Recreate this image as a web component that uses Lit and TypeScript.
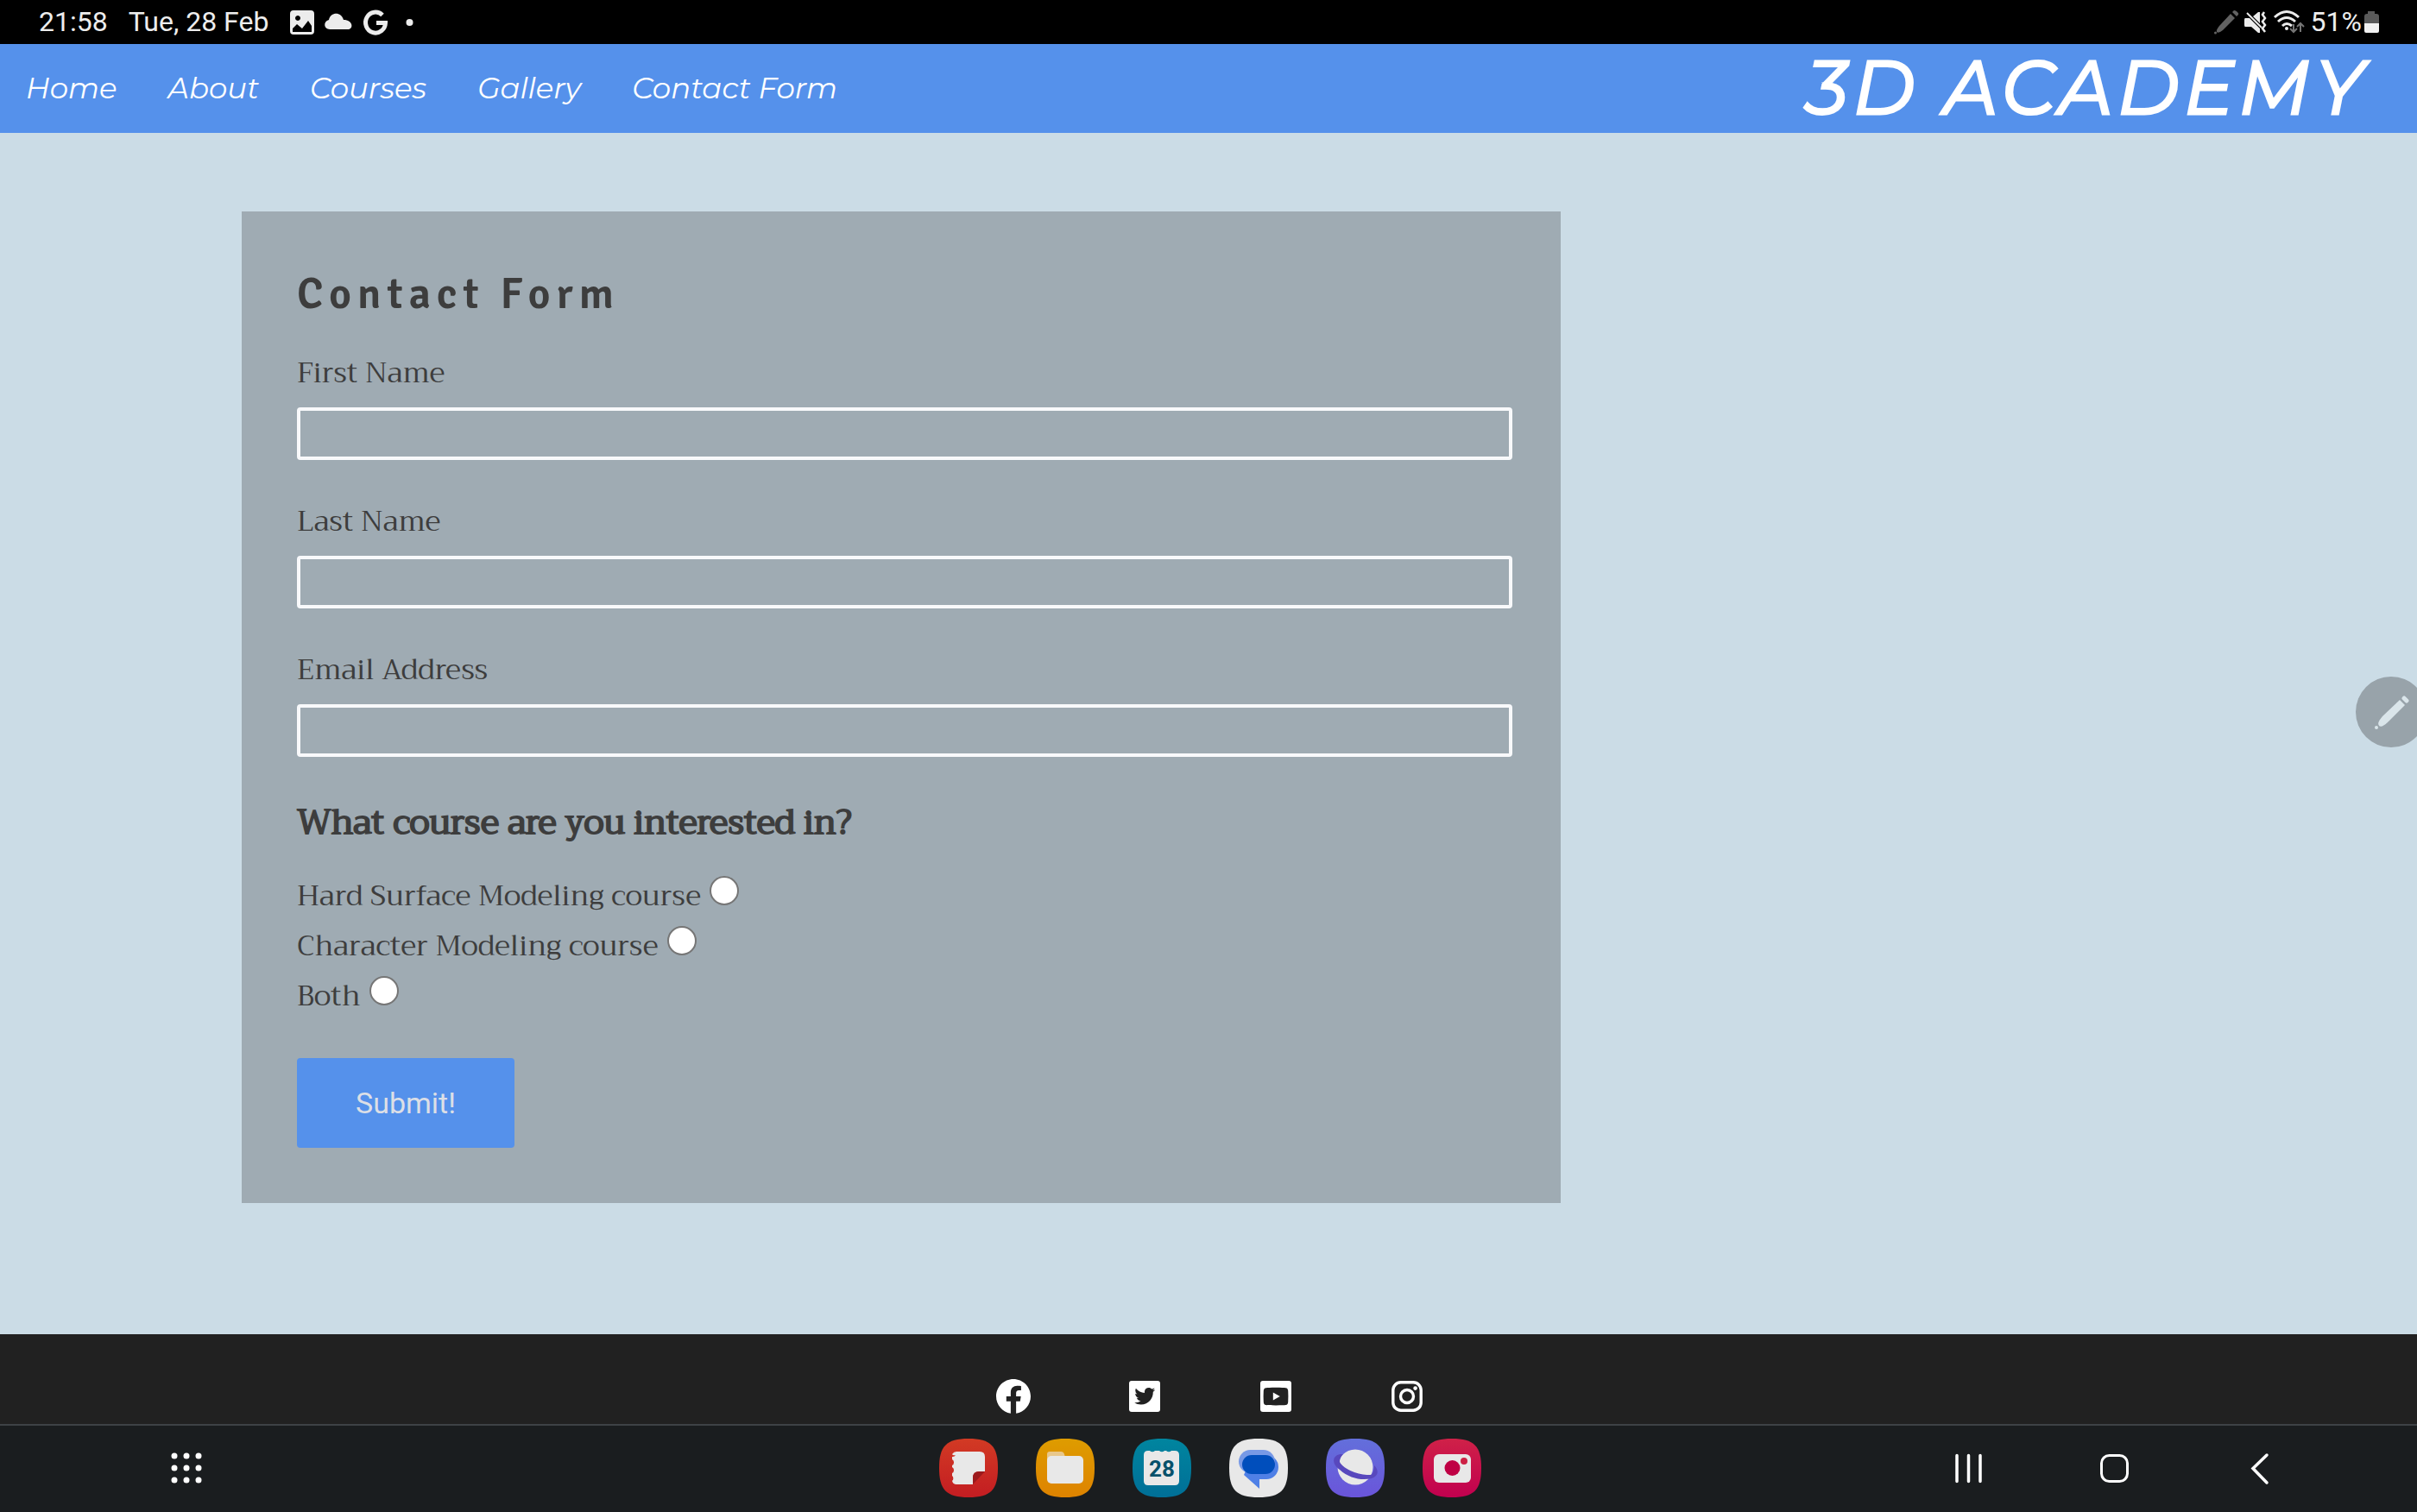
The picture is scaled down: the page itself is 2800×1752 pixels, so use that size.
import { LitElement, html, css, svg } from "lit";
import { customElement } from "lit/decorators.js";

const SQUIRCLE = "M34 0C60 0 68 9 68 34S60 68 34 68 0 59 0 34 8 0 34 0Z";

@customElement("status-bar")
class StatusBar extends LitElement {
  static styles = css`
    :host {
      display: flex;
      align-items: center;
      justify-content: space-between;
      height: 51px;
      padding: 0 42px 0 45px;
      background: #000;
      color: #ededed;
      font: 400 32px/51px Roboto, sans-serif;
    }
    .side {
      display: flex;
      align-items: center;
    }
    .date {
      margin: 0 24px;
    }
    svg {
      display: block;
    }
  `;

  render() {
    return html`
      <div class="side">
        <span>21:58</span>
        <span class="date">Tue, 28 Feb</span>
        <svg width="152" height="40" viewBox="0 0 152 40" fill="#ececec" aria-hidden="true">
          <path fill-rule="evenodd" d="M5 6H25Q29 6 29 10V30Q29 34 25 34H5Q1 34 1 30V10Q1 6 5 6ZM10 12A3 3 0 1 0 10.010 12ZM4 27V31H26V24L22 18L15 27L9 22Z"/>
          <path d="M47 28C40 28 39 19 46 17C48 8 60 7 63 17C74 17 75 28 68 28Z"/>
          <path fill="none" stroke="#ececec" stroke-width="5" d="M108 11.500A11.500 12 0 1 0 111.500 20.500H101"/>
          <circle cx="139.500" cy="20" r="4"/>
        </svg>
      </div>
      <div class="side">
        <svg width="112" height="40" viewBox="0 0 112 40" aria-hidden="true">
          <g fill="#626262">
            <path d="M19 10L24 15L10 29Q5 33 3 31Q2 29 6 24Z"/>
            <path d="M21 8L23 6Q25 6 27 8T28 11L26 13Z"/>
            <circle cx="1.500" cy="32" r="1.500"/>
          </g>
          <path fill="#ececec" d="M36 15H41L53 27V32H51L43 25H36Q35 25 35 23V17Q35 15 36 15ZM45 13L51 8H53V21Z"/>
          <path d="M38 9L55 26" stroke="#ececec" stroke-width="2"/>
          <path d="M58 8L56 11L59 15L56 19L59 23L56 27L59 31" fill="none" stroke="#ececec" stroke-width="2.500"/>
          <g fill="none" stroke="#ececec" stroke-width="3">
            <path d="M70 14Q84 1 98 14M74 19Q84 10 94 19M79 24Q84 19 90 24"/>
          </g>
          <circle cx="84" cy="27" r="2" fill="#ececec"/>
          <g fill="none" stroke="#757575" stroke-width="2">
            <path d="M92 22V30M88 27L92 31L96 27M100 31V22M96 25L100 21L104 25"/>
          </g>
        </svg>
        <span>51%</span>
        <svg width="22" height="40" viewBox="0 0 22 40" aria-hidden="true">
          <path fill="#5a5a5a" d="M7 7H15V10H17Q20 10 20 13V21H3V13Q3 10 6 10H7Z"/>
          <path fill="#f1f1f1" d="M3 21H20V30Q20 32 18 32H5Q3 32 3 30Z"/>
        </svg>
      </div>
    `;
  }
}

@customElement("site-header")
class SiteHeader extends LitElement {
  static styles = css`
    :host {
      display: flex;
      align-items: center;
      justify-content: space-between;
      height: 101px;
      padding: 0 56px 2px 30px;
      background: #5591eb;
      font-family: Montserrat, Inter, sans-serif;
      font-style: italic;
    }
    nav {
      display: flex;
      gap: 59px;
    }
    a {
      color: #fff;
      text-decoration: none;
      font-size: 34px;
      line-height: 44px;
    }
    .brand {
      color: #fff;
      font-size: 86px;
      line-height: 100px;
      letter-spacing: 6px;
      white-space: nowrap;
      -webkit-text-stroke: 3px currentColor;
    }
  `;

  private links = ["Home", "About", "Courses", "Gallery", "Contact Form"];

  render() {
    return html`
      <nav>${this.links.map((l) => html`<a href="#">${l}</a>`)}</nav>
      <div class="brand">3D ACADEMY</div>
    `;
  }
}

@customElement("contact-form")
class ContactForm extends LitElement {
  static styles = css`
    :host {
      display: block;
      color: #3d3d3d;
      font-family: Trirong, "Liberation Serif", serif;
    }
    form {
      padding: 64px;
      background: #9fabb3;
    }
    h1 {
      margin: 0 0 36px;
      font: 600 50px/64px Signika, Lato, sans-serif;
      letter-spacing: 7px;
    }
    .field {
      margin-bottom: 48px;
    }
    .field label {
      display: block;
      margin-bottom: 17px;
      font-size: 33px;
      line-height: 46px;
    }
    .field input {
      display: block;
      box-sizing: content-box;
      width: 100%;
      height: 53px;
      padding: 0;
      border: 4px solid #f8f9fb;
      border-radius: 4px;
      background: transparent;
      font: 32px Roboto, sans-serif;
    }
    fieldset {
      margin: 0 0 43px;
      padding: 0;
      border: 0;
    }
    legend {
      margin: 0 0 28px;
      padding: 0;
      font-size: 39px;
      line-height: 56px;
      -webkit-text-stroke: 2px currentColor;
    }
    .choice {
      display: flex;
      align-items: baseline;
      gap: 10px;
      height: 58px;
      font-size: 33px;
      line-height: 58px;
    }
    .choice input {
      appearance: none;
      box-sizing: border-box;
      width: 34px;
      height: 34px;
      margin: 0;
      border: 2px solid #767676;
      border-radius: 50%;
      background: #fff;
    }
    .choice input:checked {
      border-width: 10px;
      border-color: #5591eb;
    }
    button {
      display: block;
      height: 104px;
      padding: 0 68px;
      border: 0;
      border-radius: 4px;
      background: #5591eb;
      color: #dcdfe6;
      font: 400 34px/40px Roboto, sans-serif;
    }
  `;

  private fields = [
    { id: "first", label: "First Name", type: "text" },
    { id: "last", label: "Last Name", type: "text" },
    { id: "email", label: "Email Address", type: "email" },
  ];

  private courses = [
    { id: "hard", label: "Hard Surface Modeling course" },
    { id: "character", label: "Character Modeling course" },
    { id: "both", label: "Both" },
  ];

  render() {
    return html`
      <form @submit=${(e: Event) => e.preventDefault()}>
        <h1>Contact Form</h1>
        ${this.fields.map(
          (f) => html`<div class="field">
            <label for=${f.id}>${f.label}</label>
            <input id=${f.id} name=${f.id} type=${f.type} />
          </div>`
        )}
        <fieldset>
          <legend>What course are you interested in?</legend>
          ${this.courses.map(
            (c) => html`<div class="choice">
              <label for=${c.id}>${c.label}</label>
              <input id=${c.id} type="radio" name="course" value=${c.id} />
            </div>`
          )}
        </fieldset>
        <button type="submit">Submit!</button>
      </form>
    `;
  }
}

@customElement("site-footer")
class SiteFooter extends LitElement {
  static styles = css`
    :host {
      display: flex;
      justify-content: center;
      gap: 104px;
      padding: 48px 0 8px 4px;
      background: #212121;
    }
    a {
      color: #fff;
    }
    svg {
      display: block;
      width: 48px;
      height: 48px;
    }
  `;

  private icons = [
    {
      name: "Facebook",
      art: svg`<path d="M12.001 2.002c-5.522 0-9.999 4.477-9.999 9.999 0 4.990 3.656 9.126 8.437 9.879v-6.988h-2.540v-2.891h2.540V9.798c0-2.508 1.493-3.891 3.776-3.891 1.094 0 2.240.195 2.240.195v2.459h-1.264c-1.240 0-1.628.772-1.628 1.563v1.875h2.771l-.443 2.891h-2.328v6.988C18.344 21.129 22 16.992 22 12.001c0-5.522-4.477-9.999-9.999-9.999z"/>`,
    },
    {
      name: "Twitter",
      art: svg`<rect x="3" y="3" width="18" height="18" rx="1.500"/>
        <path transform="translate(4.900 4.500) scale(.61)" fill="#212121" d="M19.633 7.997c.013.175.013.349.013.523 0 5.325-4.053 11.461-11.460 11.461-2.282 0-4.402-.661-6.186-1.809.324.037.636.050.973.050a8.070 8.070 0 0 0 5.001-1.721 4.036 4.036 0 0 1-3.767-2.793c.249.037.499.062.761.062.361 0 .724-.050 1.061-.137a4.027 4.027 0 0 1-3.230-3.953v-.050c.537.299 1.160.486 1.820.511a4.022 4.022 0 0 1-1.796-3.354c0-.748.199-1.434.548-2.032a11.457 11.457 0 0 0 8.306 4.215c-.062-.300-.100-.611-.100-.923a4.026 4.026 0 0 1 4.028-4.028c1.160 0 2.207.486 2.943 1.272a7.957 7.957 0 0 0 2.556-.973 4.020 4.020 0 0 1-1.771 2.220 8.073 8.073 0 0 0 2.319-.624 8.645 8.645 0 0 1-2.019 2.083z"/>`,
    },
    {
      name: "YouTube",
      art: svg`<rect x="3" y="3" width="18" height="18" rx="1.500"/>
        <path fill="#212121" d="M12 6.900C15 6.900 17 7 17.700 7.100C18.700 7.200 19 7.900 19.100 8.800Q19.300 12 19.100 15.200C19 16.200 18.700 16.900 17.700 17C17 17.100 15 17.200 12 17.200S7 17.100 6.300 17C5.300 16.900 5 16.200 4.900 15.200Q4.700 12 4.900 8.800C5 7.900 5.300 7.200 6.300 7.100C7 7 9 6.900 12 6.900Z"/>
        <path d="M10.400 9.800V14.300L14.400 12Z"/>`,
    },
    {
      name: "Instagram",
      art: svg`<rect x="3.900" y="3.900" width="16.200" height="16.200" rx="4.500" fill="none" stroke="currentColor" stroke-width="1.700"/>
        <circle cx="12" cy="12" r="3.750" fill="none" stroke="currentColor" stroke-width="1.700"/>
        <circle cx="16.800" cy="7.300" r="1.150"/>`,
    },
  ];

  render() {
    return this.icons.map(
      (i) => html`<a href="#" aria-label=${i.name}
        ><svg viewBox="0 0 24 24" fill="currentColor">${i.art}</svg></a
      >`
    );
  }
}

@customElement("task-bar")
class TaskBar extends LitElement {
  static styles = css`
    :host {
      display: grid;
      grid-template-columns: 1fr auto 1fr;
      align-items: center;
      height: 98px;
      padding: 0 146px 2px 150px;
      border-top: 2px solid #3e4246;
      background: #1a1d1f;
    }
    button {
      display: block;
      padding: 0;
      border: 0;
      background: none;
    }
    svg {
      display: block;
      overflow: visible;
    }
    .apps {
      display: flex;
      gap: 44px;
    }
    .start {
      display: flex;
      padding-left: 46px;
    }
    .end {
      display: flex;
      justify-content: flex-end;
      gap: 129px;
      padding-right: 16px;
    }
    .day {
      font: 700 26px Roboto, sans-serif;
    }
  `;

  private apps = [
    {
      name: "Notes",
      top: "#d23a24",
      bottom: "#c31d22",
      art: svg`<path fill="#e8e8e8" d="M20 15H47Q53 15 53 21V38H47Q39 38 39 46V53H20Q16 53 15 49A4 4 0 0 0 15 43V40A4 4 0 0 0 15 33V31A4 4 0 0 0 15 24V21A4 4 0 0 0 19 19Q16 20 15 18Q17 15 20 15Z"/>
        <path fill="#9c1a1d" d="M39 53V45Q39 38 46 38H53Z"/>`,
    },
    {
      name: "Files",
      top: "#de9c00",
      bottom: "#de8300",
      art: svg`<path fill="#e8c78b" d="M13 25V18Q13 15 16 15H29Q32 15 33 18L34 22V25Z"/>
        <rect x="13" y="20" width="42" height="32" rx="5" fill="#e8e8e8"/>`,
    },
    {
      name: "Calendar",
      top: "#00859f",
      bottom: "#006f97",
      art: svg`<path fill="#e8e8e8" d="M18 14H20A4 4 0 0 0 26 14H31A4 4 0 0 0 37 14H39A4 4 0 0 0 45 14H49Q54 14 54 19V49Q54 54 49 54H18Q13 54 13 49V19Q13 14 18 14Z"/>
        <text class="day" x="34" y="44" text-anchor="middle" fill="#07516b">28</text>`,
    },
    {
      name: "Messages",
      top: "#e8e8e8",
      bottom: "#e8e8e8",
      art: svg`<path fill="#4f80e6" d="M27 19H43A14 14 0 0 1 43 47H35V58L17 42Z"/>
        <rect x="11" y="13" width="42" height="27" rx="13.500" fill="#7799e6"/>
        <rect x="15" y="19" width="38" height="22" rx="11" fill="#004ebc"/>`,
    },
    {
      name: "Internet",
      top: "#636fdb",
      bottom: "#6a55da",
      art: svg`<circle cx="34" cy="33" r="20.500" fill="#e8e8e8"/>
        <path fill="#5848bd" d="M20 18C8 17 5 28 16 36C27 46 42 49 53 46C62 43 61 36 56 31Q56 40 52 42C42 43 21 37 16 27Q16 22 20 18Z"/>`,
    },
    {
      name: "Camera",
      top: "#cf2148",
      bottom: "#c1004f",
      art: svg`<rect x="13" y="18" width="43" height="33" rx="6" fill="#e8e8e8"/>
        <circle cx="34.500" cy="34" r="9" fill="#bf0044"/>
        <circle cx="48" cy="26" r="4" fill="#cd2145"/>`,
    },
  ];

  render() {
    const dots = [6, 20, 34];
    return html`
      <div class="start">
        <button aria-label="All apps">
          <svg width="40" height="40" fill="#fff">
            ${dots.map((y) => dots.map((x) => svg`<circle cx=${x} cy=${y} r="3.500"/>`))}
          </svg>
        </button>
      </div>
      <div class="apps">
        ${this.apps.map(
          (a) => html`<button aria-label=${a.name}>
            <svg width="68" height="68" viewBox="0 0 68 68">
              <defs>
                <linearGradient id=${a.name} x2="0" y2="1">
                  <stop stop-color=${a.top} />
                  <stop offset="1" stop-color=${a.bottom} />
                </linearGradient>
              </defs>
              <path d=${SQUIRCLE} fill="url(#${a.name})" />
              ${a.art}
            </svg>
          </button>`
        )}
      </div>
      <div class="end">
        <button aria-label="Recent apps">
          <svg width="40" height="40" fill="none" stroke="#fff" stroke-width="3.500" stroke-linecap="round">
            <path d="M7 5.500V35.500M20.500 5.500V35.500M34 5.500V35.500"/>
          </svg>
        </button>
        <button aria-label="Home screen">
          <svg width="40" height="40" fill="none" stroke="#fff" stroke-width="3">
            <rect x="5.500" y="5.500" width="30" height="30" rx="9"/>
          </svg>
        </button>
        <button aria-label="Back">
          <svg width="40" height="40" fill="none" stroke="#fff" stroke-width="3.500" stroke-linecap="round">
            <path d="M28 5L12 20.500L28 37"/>
          </svg>
        </button>
      </div>
    `;
  }
}

@customElement("app-root")
class AppRoot extends LitElement {
  static styles = css`
    :host {
      position: relative;
      display: flex;
      flex-direction: column;
      min-height: 100vh;
      overflow: hidden;
      background: #cbdce6;
    }
    main {
      flex: 1;
      display: grid;
      grid-template-columns: calc(100% * 5 / 9 + 128px);
      align-content: start;
      padding: 91px 0 80px 10%;
    }
    .pen {
      position: absolute;
      top: 784px;
      right: -11px;
      width: 82px;
      height: 82px;
      padding: 0;
      border: 0;
      border-radius: 50%;
      background: #98a3aa;
    }
    .pen svg {
      display: block;
    }
  `;

  render() {
    return html`
      <status-bar></status-bar>
      <site-header></site-header>
      <main><contact-form></contact-form></main>
      <site-footer></site-footer>
      <task-bar></task-bar>
      <button class="pen" aria-label="Pen menu">
        <svg width="82" height="82" fill="#dae5ea">
          <path d="M51 27L57 33L38 52Q30 60 27 57T31 46Z"/>
          <rect x="53" y="24" width="9" height="5" rx="2" transform="rotate(45 57.500 26.500)"/>
          <circle cx="24" cy="59" r="2"/>
        </svg>
      </button>
    `;
  }
}
